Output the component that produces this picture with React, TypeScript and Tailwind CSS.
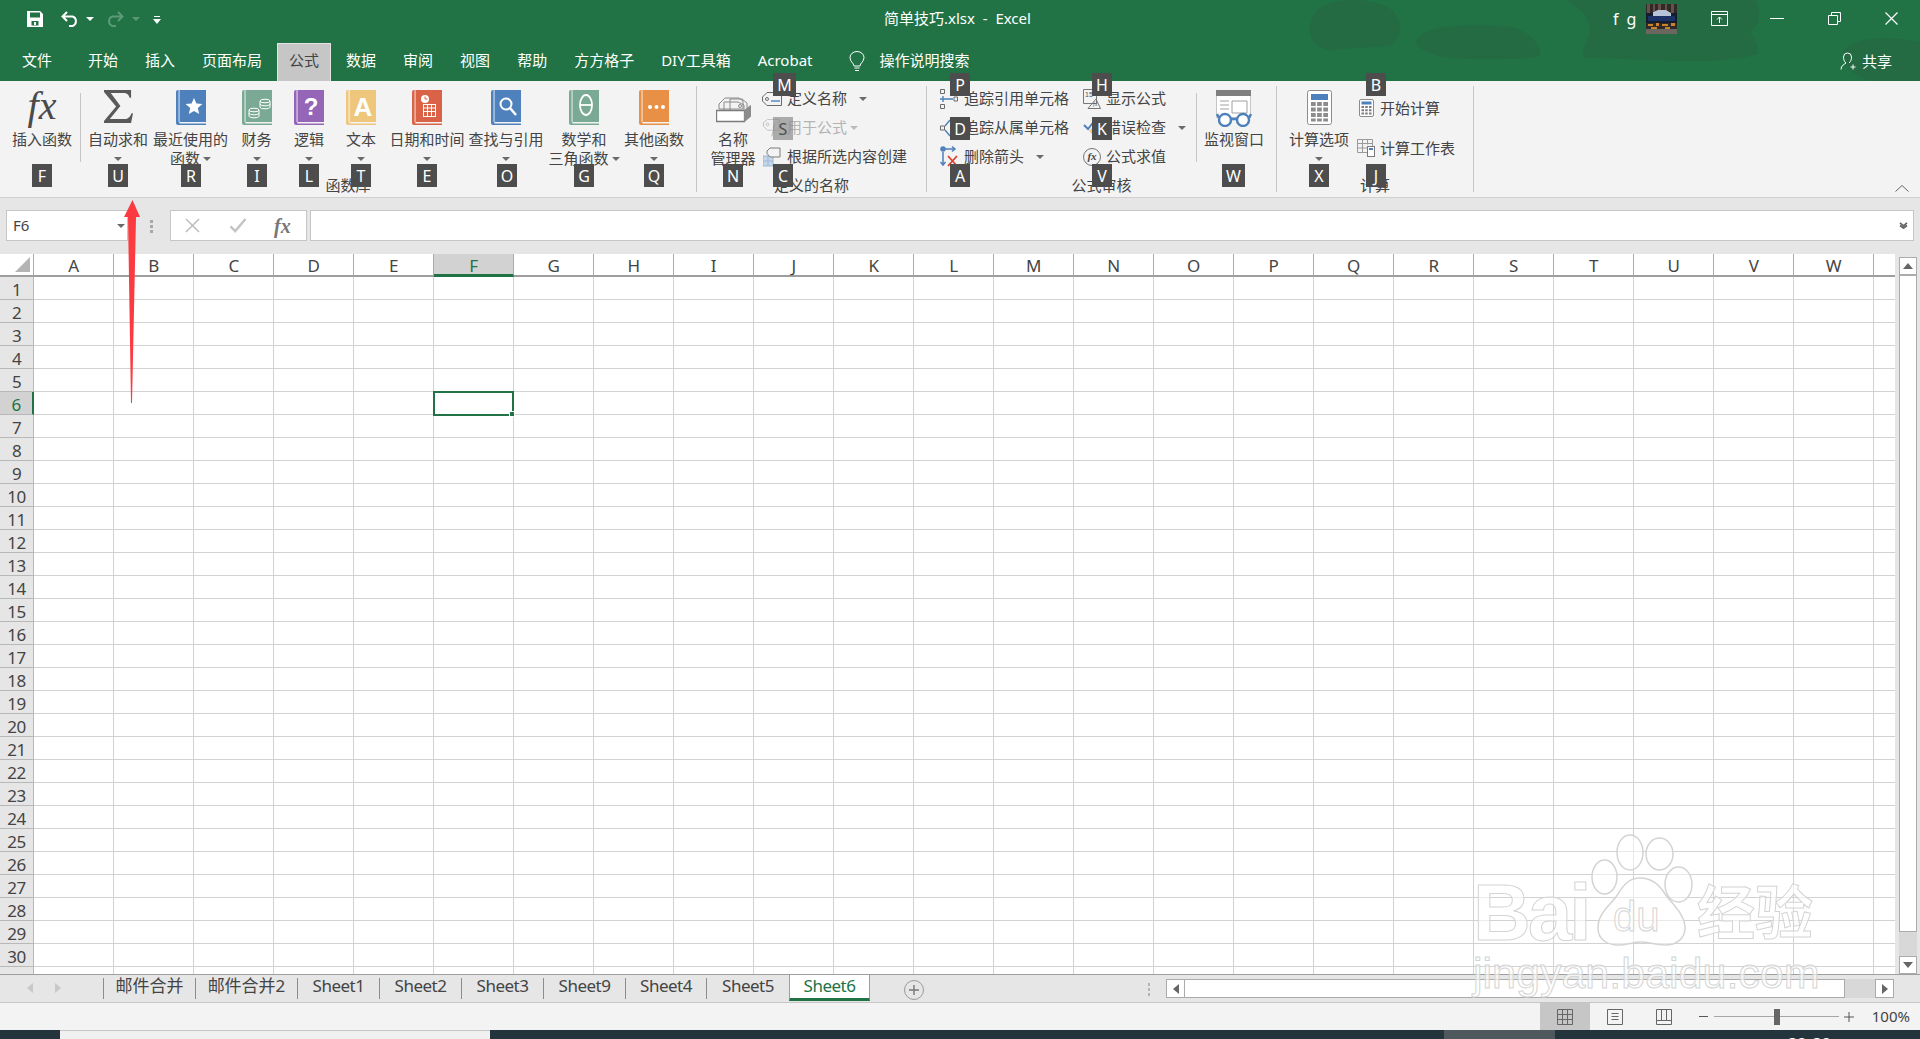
import { type ReactNode } from "react";

const columns = "ABCDEFGHIJKLMNOPQRSTUVW".split("");
const rows = Array.from({ length: 31 }, (_, i) => i + 1);

const tabs = [
  { label: "文件", className: "ml-[10px] mr-[9px]" },
  { label: "开始" },
  { label: "插入" },
  { label: "页面布局" },
  { label: "公式", active: true },
  { label: "数据" },
  { label: "审阅" },
  { label: "视图" },
  { label: "帮助" },
  { label: "方方格子" },
  { label: "DIY工具箱" },
  { label: "Acrobat" },
];

const sheets = [
  { label: "邮件合并", className: "w-[92px]" },
  { label: "邮件合并2", className: "w-[102px]" },
  { label: "Sheet1", className: "w-[82px] tracking-[-0.5px]" },
  { label: "Sheet2", className: "w-[82px] tracking-[-0.5px]" },
  { label: "Sheet3", className: "w-[82px] tracking-[-0.5px]" },
  { label: "Sheet9", className: "w-[82px] tracking-[-0.5px]" },
  { label: "Sheet4", className: "w-[81px] tracking-[-0.5px]" },
  { label: "Sheet5", className: "w-[83px] tracking-[-0.5px]" },
];

const keyTips = [
  { key: "F", left: "left-[32px]", top: "top-[164px]" },
  { key: "U", left: "left-[108px]", top: "top-[164px]" },
  { key: "R", left: "left-[181px]", top: "top-[164px]" },
  { key: "I", left: "left-[247px]", top: "top-[164px]" },
  { key: "L", left: "left-[299px]", top: "top-[164px]" },
  { key: "T", left: "left-[351px]", top: "top-[164px]" },
  { key: "E", left: "left-[417px]", top: "top-[164px]" },
  { key: "O", left: "left-[497px]", top: "top-[164px]" },
  { key: "G", left: "left-[574px]", top: "top-[164px]" },
  { key: "Q", left: "left-[644px]", top: "top-[164px]" },
  { key: "N", left: "left-[723px]", top: "top-[164px]" },
  { key: "M", left: "left-[773px]", top: "top-[73px]", wide: true },
  { key: "C", left: "left-[773px]", top: "top-[164px]" },
  { key: "P", left: "left-[950px]", top: "top-[73px]" },
  { key: "D", left: "left-[950px]", top: "top-[117px]" },
  { key: "A", left: "left-[950px]", top: "top-[164px]" },
  { key: "H", left: "left-[1092px]", top: "top-[73px]" },
  { key: "K", left: "left-[1092px]", top: "top-[117px]" },
  { key: "V", left: "left-[1092px]", top: "top-[164px]" },
  { key: "W", left: "left-[1222px]", top: "top-[164px]", wide: true },
  { key: "X", left: "left-[1309px]", top: "top-[164px]" },
  { key: "B", left: "left-[1366px]", top: "top-[73px]" },
  { key: "J", left: "left-[1366px]", top: "top-[164px]" },
];

function Caret({ className = "" }: { className?: string }) {
  return (
    <svg viewBox="0 0 8 4" className={`h-[4px] w-[8px] shrink-0 ${className}`} fill="#6a6a6a">
      <path d="M0 0h8L4 4z" />
    </svg>
  );
}

function Book({ color, children }: { color: string; children?: ReactNode }) {
  return (
    <svg viewBox="0 0 30 35" className="h-[35px] w-[30px]">
      <path d="M2 0h28v32H3.500a1.500 1.500 0 0 0 0 1.400H30V35H2a2 2 0 0 1-2-2V2a2 2 0 0 1 2-2z" fill={color} />
      <rect x="2.600" y="0" width="0.900" height="32" fill="#fff" opacity="0.900" />
      {children}
    </svg>
  );
}

function Coins() {
  return (
    <g fill="none" stroke="#fff" strokeWidth="1">
      <ellipse cx="23" cy="11" rx="5" ry="1.800" />
      <path d="M18 11v6c0 1 2 1.800 5 1.800s5-.8 5-1.800v-6M18 14c0 1 2 1.800 5 1.800s5-.8 5-1.800" />
      <ellipse cx="12" cy="20" rx="5" ry="1.800" />
      <path d="M7 20v6c0 1 2 1.800 5 1.800s5-.8 5-1.800v-6M7 23c0 1 2 1.800 5 1.800s5-.8 5-1.800" />
    </g>
  );
}

function LargeButton({
  width,
  icon,
  label,
  second,
  caret = true,
  className = "",
}: {
  width: string;
  icon: ReactNode;
  label: string;
  second?: string;
  caret?: boolean;
  className?: string;
}) {
  return (
    <div className={`flex shrink-0 flex-col items-center pt-[4px] ${width} ${className}`}>
      <div className="flex h-[36px] items-start justify-center">{icon}</div>
      <div className="mt-[4px] whitespace-nowrap leading-[19px]">{label}</div>
      {second ? (
        <div className="flex items-center gap-[3px] whitespace-nowrap leading-[19px]">
          {second}
          {caret ? <Caret /> : null}
        </div>
      ) : caret ? (
        <Caret className="mt-[8px]" />
      ) : null}
    </div>
  );
}

function SmallButton({
  icon,
  label,
  iconWidth,
  gap,
  caret,
  disabled,
  height = "h-[29px]",
}: {
  icon: ReactNode;
  label: string;
  iconWidth: string;
  gap: string;
  caret?: string;
  disabled?: boolean;
  height?: string;
}) {
  return (
    <div className={`flex items-center whitespace-nowrap ${height} ${disabled ? "text-[#b4b4b4]" : ""}`}>
      <div className={`flex shrink-0 justify-center ${iconWidth} ${gap}`}>{icon}</div>
      {label}
      {caret ? <Caret className={caret} /> : null}
    </div>
  );
}

function Group({
  width,
  label,
  children,
}: {
  width: string;
  label: string;
  children: ReactNode;
}) {
  return (
    <div className={`mt-[5px] flex h-[106px] shrink-0 flex-col border-r border-[#c6c6c6] ${width}`}>
      <div className="flex h-[90px] shrink-0 items-start">{children}</div>
      <div className="shrink-0 whitespace-nowrap text-center leading-[19px]">{label}</div>
    </div>
  );
}

function TitleBlobs() {
  return (
    <svg viewBox="0 0 640 81" className="pointer-events-none absolute right-0 top-0 h-[81px] w-[640px]" fill="#246b44">
      <path d="M40 8c18-12 60-10 74 4 10 12 8 26-4 33-18 4-48 2-60 6-14-4-22-12-20-24 1-8 4-14 10-19z" />
      <path d="M146 32c20-8 60-8 90-4 20 8 24 20 24 28-20 4-60 4-90 2-20-2-36-10-34-18 2-4 6-6 10-8z" />
      <path d="M286 0h190c4 10 6 24-6 32 6 8 8 14 8 22-24 8-70 8-100 6-22 0-48-2-70-2-10-2-2-12 0-20 4-6 4-24-22-38z" />
      <path d="M564 50c10-14 46-14 76-8v39h-50c-20-6-30-20-26-31z" />
    </svg>
  );
}

function Avatar() {
  return (
    <svg viewBox="0 0 31 30" className="h-[30px] w-[31px]">
      <rect width="31" height="30" fill="#2f2a2a" />
      <path d="M1 0h3v9H1zM7 0h2v7H7zM12 0h3v6h-3zM19 0h2v6h-2zM25 0h3v9h-3z" fill="#6a4f46" />
      <path d="M0 9h31v10H0z" fill="#141c30" />
      <path d="M7 8l5-2h8l5 3v3H7z" fill="#b8c4d8" />
      <rect x="2" y="12" width="27" height="5" fill="#1c3264" />
      <path d="M2 20h5v2H2zM10 19h3v3h-3zM16 20h6v2h-6zM25 19h4v3h-4zM5 23h6v2H5zM19 23h5v2h-5z" fill="#c9832c" />
      <rect y="25" width="31" height="5" fill="#6b6660" />
    </svg>
  );
}

function FormulaBar() {
  return (
    <div className="flex h-[56px] shrink-0 items-start bg-[#e6e6e6] pt-[12px]">
      <div className="ml-[6px] flex h-[31px] w-[122px] items-center justify-between border border-[#c6c6c6] bg-white pl-[6px] pr-[2px] text-[15px] text-[#444]">
        F6
        <Caret />
      </div>
      <div className="ml-[22px] mt-[10px] flex w-[4px] flex-col gap-[2px]">
        <span className="h-[3px] w-[3px] bg-[#a8a8a8]" />
        <span className="h-[3px] w-[3px] bg-[#a8a8a8]" />
        <span className="h-[3px] w-[3px] bg-[#a8a8a8]" />
      </div>
      <div className="ml-[16px] flex h-[31px] w-[137px] items-center border border-[#c6c6c6] bg-white">
        <svg viewBox="0 0 16 16" className="ml-[14px] h-[15px] w-[15px]" stroke="#bdbdbd" strokeWidth="1.600" fill="none">
          <path d="M1 1l14 14M15 1L1 15" />
        </svg>
        <svg viewBox="0 0 18 16" className="ml-[29px] h-[15px] w-[18px]" stroke="#c4c4c4" strokeWidth="2.600" fill="none">
          <path d="M1 9l5 5L17 1" />
        </svg>
        <span className="ml-[27px] font-['Liberation_Serif',serif] text-[20px] font-bold italic leading-none text-[#777]">fx</span>
      </div>
      <div className="ml-[3px] flex h-[31px] w-[1604px] items-center justify-end border border-[#c6c6c6] bg-white pr-[5px]">
        <svg viewBox="0 0 10 8" className="h-[7px] w-[9px]" fill="none" stroke="#666" strokeWidth="2">
          <path d="M1 1l4 3.500L9 1M1 4l4 3 4-3" />
        </svg>
      </div>
    </div>
  );
}

function SheetGrid() {
  return (
    <div className="flex h-[720px] w-[1895px] shrink-0 flex-col text-[17px] tracking-[-0.5px] text-[#444]">
      <div className="flex h-[23px] shrink-0 border-b-2 border-[#9e9e9e]">
        <div className="flex w-[34px] shrink-0 items-end justify-end border-r border-[#ababab] pb-[3px] pr-[3px]">
          <svg viewBox="0 0 15 15" className="h-[15px] w-[15px]" fill="#b4b4b4">
            <path d="M15 0v15H0z" />
          </svg>
        </div>
        {columns.map((column) => (
          <div
            key={column}
            className={`flex w-[80px] shrink-0 items-center justify-center border-r border-[#ababab] pt-[3px] ${column === "F" ? "-mb-[2px] border-b-[3px] border-b-[#217346] bg-[#d2d2d2] text-[#217346]" : ""}`}
          >
            {column}
          </div>
        ))}
      </div>
      <div className="relative min-h-0 flex-1 overflow-hidden bg-white">
        {rows.map((row) => (
          <div key={row} className="flex h-[23px]">
            <div
              className={`flex w-[34px] shrink-0 items-center justify-center border-b border-r border-[#b8b8b8] pt-[3px] ${row === 6 ? "border-r-2 border-r-[#217346] bg-[#d2d2d2] text-[#217346]" : "bg-[#e6e6e6]"}`}
            >
              {row}
            </div>
            {columns.map((column) => (
              <div key={column} className="w-[80px] shrink-0 border-b border-r border-[#d2d2d2]" />
            ))}
            <div className="flex-1 border-b border-[#d2d2d2]" />
          </div>
        ))}
        <div className="absolute left-[433px] top-[114px] h-[25px] w-[81px] border-2 border-[#217346]">
          <span className="absolute -bottom-[3px] -right-[3px] h-[6px] w-[6px] border border-white bg-[#217346]" />
        </div>
      </div>
    </div>
  );
}

function VerticalScroll() {
  return (
    <div className="flex h-[720px] flex-1 flex-col items-center bg-[#e6e6e6] pl-[4px] pr-[3px] pt-[3px]">
      <div className="flex h-[18px] w-[18px] items-center justify-center border border-[#ababab] bg-white">
        <svg viewBox="0 0 10 6" className="h-[6px] w-[10px]" fill="#666">
          <path d="M5 0l5 6H0z" />
        </svg>
      </div>
      <div className="h-[657px] w-[18px] border border-[#ababab] bg-white" />
      <div className="h-[24px] w-[18px] bg-[#d8d8d8]" />
      <div className="flex h-[18px] w-[18px] items-center justify-center border border-[#ababab] bg-white">
        <svg viewBox="0 0 10 6" className="h-[6px] w-[10px]" fill="#666">
          <path d="M5 6L0 0h10z" />
        </svg>
      </div>
    </div>
  );
}

function SheetTabs() {
  return (
    <div className="flex h-[29px] shrink-0 items-start border-b border-t border-b-[#c6c6c6] border-t-[#9e9e9e] bg-[#e6e6e6] text-[#444]">
      <div className="flex h-[26px] w-[103px] items-center pl-[27px]">
        <svg viewBox="0 0 6 10" className="h-[10px] w-[6px]" fill="#c8c8c8">
          <path d="M0 5l6-5v10z" />
        </svg>
        <svg viewBox="0 0 6 10" className="ml-[22px] h-[10px] w-[6px]" fill="#c8c8c8">
          <path d="M6 5L0 10V0z" />
        </svg>
      </div>
      {sheets.map((sheet) => (
        <div key={sheet.label} className={`mt-[3px] flex h-[21px] items-center justify-center border-l border-[#8c8c8c] pb-[5px] text-[17px] ${sheet.className}`}>
          {sheet.label}
        </div>
      ))}
      <div className="flex h-[26px] w-[81px] items-center justify-center border-b-[3px] border-l border-r border-b-[#217346] border-l-[#9e9e9e] border-r-[#9e9e9e] bg-white pb-[2px] text-[17px] tracking-[-0.5px] text-[#217346]">
        Sheet6
      </div>
      <div className="ml-[34px] mt-[5px] flex h-[20px] w-[20px] items-center justify-center rounded-full border border-[#9a9a9a] text-[#777]">
        <svg viewBox="0 0 10 10" className="h-[10px] w-[10px]" stroke="#777" strokeWidth="1.400">
          <path d="M5 0v10M0 5h10" />
        </svg>
      </div>
      <div className="ml-[224px] mt-[8px] flex flex-col gap-[2px]">
        <span className="h-[3px] w-[2px] bg-[#b4b4b4]" />
        <span className="h-[3px] w-[2px] bg-[#b4b4b4]" />
        <span className="h-[3px] w-[2px] bg-[#b4b4b4]" />
      </div>
      <div className="ml-[16px] mt-[4px] flex h-[19px] w-[728px] items-stretch">
        <div className="flex w-[19px] items-center justify-center border border-[#ababab] bg-white">
          <svg viewBox="0 0 6 10" className="h-[10px] w-[6px]" fill="#666">
            <path d="M0 5l6-5v10z" />
          </svg>
        </div>
        <div className="w-[660px] border-y border-r border-[#ababab] bg-white" />
        <div className="w-[30px] bg-[#d8d8d8]" />
        <div className="flex w-[19px] items-center justify-center border border-[#ababab] bg-white">
          <svg viewBox="0 0 6 10" className="h-[10px] w-[6px]" fill="#666">
            <path d="M6 5L0 10V0z" />
          </svg>
        </div>
      </div>
    </div>
  );
}

function StatusBar() {
  return (
    <div className="flex h-[27px] shrink-0 items-center justify-end bg-[#f3f3f3] pr-[10px] text-[#444]">
      <div className="flex h-full w-[50px] items-center justify-center bg-[#c6c6c6]">
        <svg viewBox="0 0 16 16" className="h-[16px] w-[16px]" fill="none" stroke="#666">
          <path d="M.5.5h15v15H.5zM5.500.5v15M10.500.500v15M.5 5.500h15M.5 10.500h15" />
        </svg>
      </div>
      <svg viewBox="0 0 16 16" className="ml-[17px] h-[16px] w-[16px]" fill="none" stroke="#666">
        <path d="M.5.5h15v15H.5zM4.500 4.500h7M4.500 7.500h7M4.500 10.500h7" />
      </svg>
      <svg viewBox="0 0 16 16" className="ml-[33px] h-[16px] w-[16px]" fill="none" stroke="#666">
        <path d="M.5.500h15v15H.5zM.5 11.500h15M5.500.5v11M10.500.5v11" />
      </svg>
      <span className="ml-[27px] h-[1px] w-[9px] bg-[#555]" />
      <div className="relative ml-[6px] flex h-[16px] w-[125px] items-center">
        <span className="h-[1px] w-full bg-[#a6a6a6]" />
        <span className="absolute left-[60px] top-0 h-[16px] w-[6px] bg-[#666]" />
      </div>
      <svg viewBox="0 0 10 10" className="ml-[5px] h-[10px] w-[10px]" stroke="#555">
        <path d="M5 0v10M0 5h10" />
      </svg>
      <span className="ml-[18px] text-[15px]">100%</span>
    </div>
  );
}

function Taskbar() {
  return (
    <div className="flex h-[9px] shrink-0 overflow-hidden bg-[#24343c]">
      <div className="ml-[60px] h-full w-[430px] border-t border-[#c6c6c6] bg-[#f0f0f0]" />
      <div className="ml-[954px] h-full w-[111px] bg-[#4e585d]" />
      <div className="ml-[233px] text-[15px] font-bold leading-[24px] tracking-[1px] text-white">20:20</div>
    </div>
  );
}

function Watermark() {
  return (
    <div className="pointer-events-none absolute left-[1470px] top-[832px] h-[170px] w-[360px] font-['Liberation_Sans',sans-serif] text-white/60 [-webkit-text-stroke:1px_#d4d4d4]">
      <span className="absolute left-[3px] top-[41px] text-[80px] font-bold leading-none tracking-[-3px]">Bai</span>
      <svg viewBox="0 0 104 116" className="absolute left-[120px] top-0 h-[116px] w-[104px]" fill="rgba(255,255,255,.5)" stroke="#d4d4d4" strokeWidth="1.500">
        <ellipse cx="14.500" cy="45" rx="12.500" ry="17" />
        <ellipse cx="40" cy="20.500" rx="13" ry="17.500" />
        <ellipse cx="69.500" cy="22" rx="13.500" ry="16" />
        <ellipse cx="88.500" cy="52.500" rx="13.500" ry="17.500" />
        <path d="M50 46c-10 0-16 6-22 16-6 10-20 18-20 34 0 12 10 17 20 17 10 0 14-3 23-3 8 0 13 3 24 3 11 0 20-6 20-17 0-14-13-24-20-34-6-10-15-16-25-16z" />
      </svg>
      <span className="absolute left-[143px] top-[64px] text-[42px] leading-none">du</span>
      <span className="absolute left-[227px] top-[48px] font-['Noto_Sans_CJK_SC',sans-serif] text-[58px] font-bold leading-none">经验</span>
      <span className="absolute left-[3px] top-[120px] text-[43px] leading-none">jingyan.baidu.com</span>
    </div>
  );
}

export default function App() {
  return (
    <div className="relative flex h-[1039px] w-[1920px] flex-col overflow-hidden bg-white font-['Noto_Sans','Noto_Sans_CJK_SC',sans-serif] text-[15px]">
      <div className="relative h-[81px] shrink-0 bg-[#217346] text-white">
        <TitleBlobs />
        <div className="relative flex h-[43px] items-center pb-[6px]">
          <svg viewBox="0 0 16 16" className="ml-[27px] h-[16px] w-[16px]" fill="#fff">
            <path fillRule="evenodd" d="M0 0h13l3 3v13H0zM3 1.500v5h10v-5zM4.500 10v4.500h7V10zM7 11h2v3H7z" />
          </svg>
          <svg viewBox="0 0 19 16" className="ml-[18px] h-[16px] w-[19px]" fill="none" stroke="#fff" strokeWidth="2">
            <path d="M6 1L1.500 5.500 6 10M2 5.500h9.500a5 5 0 0 1 0 9.500H8" />
          </svg>
          <Caret className="ml-[6px] [&_path]:fill-white" />
          <svg viewBox="0 0 19 16" className="ml-[11px] h-[16px] w-[19px]" fill="none" stroke="#5a9a78" strokeWidth="2">
            <path d="M13 1l4.500 4.500L13 10M17 5.500H7.500a5 5 0 0 0 0 9.500H11" />
          </svg>
          <Caret className="ml-[8px] [&_path]:fill-[#5a9a78]" />
          <svg viewBox="0 0 8 8" className="ml-[13px] mt-[3px] h-[8px] w-[8px]" fill="#fff">
            <path d="M1 0h6v1H1zM0 3h8L4 8z" />
          </svg>
          <span className="ml-[723px] whitespace-nowrap">简单技巧.xlsx&nbsp; -&nbsp; Excel</span>
          <span className="ml-[582px] text-[16px] tracking-[2px]">f g</span>
          <div className="ml-[8px]">
            <Avatar />
          </div>
          <svg viewBox="0 0 17 15" className="ml-[34px] h-[15px] w-[17px]" fill="none" stroke="#fff">
            <path d="M.5.5h16v14H.5zM.5 3.500h16M8.500 12V6M6 8.500l2.500-2.500L11 8.500" />
          </svg>
          <span className="ml-[42px] h-[1px] w-[14px] bg-white" />
          <svg viewBox="0 0 13 13" className="ml-[44px] h-[13px] w-[13px]" fill="none" stroke="#fff">
            <path d="M.5 3.500h9v9h-9zM3.500 3.500v-3h9v9h-3" />
          </svg>
          <svg viewBox="0 0 13 13" className="ml-[44px] h-[13px] w-[13px]" fill="none" stroke="#fff" strokeWidth="1.200">
            <path d="M.5.5l12 12M12.500.5l-12 12" />
          </svg>
        </div>
        <div className="relative flex h-[38px] items-stretch gap-[3px]">
          {tabs.map((tab) => (
            <div
              key={tab.label}
              className={`flex items-center whitespace-nowrap pb-[4px] ${tab.className ?? ""} ${tab.active ? "border-x border-t border-[#e4e4e4] bg-[#c6c6c6] px-[11px] text-[#444]" : "px-[12px]"}`}
            >
              {tab.label}
            </div>
          ))}
          <svg viewBox="0 0 16 22" className="ml-[21px] mt-[8px] h-[22px] w-[16px]" fill="none" stroke="#fff">
            <path d="M5 15c0-3-4-4-4-8.500a7 6 0 0 1 14 0C15 11 11 12 11 15zM5.500 17h5M6 19.500h4" />
          </svg>
          <span className="ml-[12px] flex items-center whitespace-nowrap pb-[4px]">操作说明搜索</span>
          <div className="ml-auto flex items-center pb-[2px] pr-[28px]">
            <svg viewBox="0 0 18 18" className="h-[18px] w-[18px]" fill="none" stroke="#fff">
              <path d="M1 17.500c0-4 3-5 5-6.500-2-1.500-2.500-4-2.500-6a4 4 0 0 1 8 0c0 2-.5 4.500-2.500 6M13 12.500v5M10.500 15h5" />
            </svg>
            <span className="ml-[4px]">共享</span>
          </div>
        </div>
      </div>

      <div className="flex h-[117px] shrink-0 border-b border-[#d0d0d0] bg-[#f3f3f3] text-[#444]">
        <Group width="w-[697px]" label="函数库">
          <LargeButton
            width="w-[76px]"
            className="ml-[4px]"
            caret={false}
            label="插入函数"
            icon={<span className="-mt-[6px] font-['Liberation_Serif',serif] text-[40px] italic leading-[44px] text-[#4a4a4a]">fx</span>}
          />
          <div className="mt-[7px] h-[69px] w-px shrink-0 bg-[#c6c6c6]" />
          <LargeButton
            width="w-[74px]"
            label="自动求和"
            icon={
              <svg viewBox="0 0 30 34" className="h-[33px] w-[29px]" fill="#595959">
                <path d="M0 0h28v8h-1.500C25.500 4.500 24 3 20 3H7l10 13.500L6 30h15c4 0 6-2 7.500-6H30l-2 10H0v-2l12.500-15L0 2z" />
              </svg>
            }
          />
          <LargeButton
            width="w-[71px]"
            label="最近使用的"
            second="函数"
            icon={
              <Book color="#4e81bc">
                <path d="M18 8l2.400 5.600 6 .5-4.600 4 1.400 5.900-5.200-3.100-5.200 3.100 1.400-5.900-4.600-4 6-.5z" fill="#fff" />
              </Book>
            }
          />
          <LargeButton width="w-[61px]" label="财务" icon={<Book color="#7aaa96"><Coins /></Book>} />
          <LargeButton
            width="w-[44px]"
            label="逻辑"
            icon={
              <Book color="#9566b8">
                <text x="17" y="25" textAnchor="middle" fontSize="24" fontWeight="700" fill="#fff" fontFamily="Liberation Sans">?</text>
              </Book>
            }
          />
          <LargeButton
            width="w-[60px]"
            label="文本"
            icon={
              <Book color="#efc77c">
                <text x="17" y="26" textAnchor="middle" fontSize="26" fontWeight="700" fill="#fff" fontFamily="Liberation Sans">A</text>
              </Book>
            }
          />
          <LargeButton
            width="w-[72px]"
            label="日期和时间"
            icon={
              <Book color="#da6347">
                <circle cx="13" cy="9" r="4" fill="#fff" />
                <path d="M13 6.500V9h2.500" stroke="#da6347" fill="none" />
                <path fill="#fff" fillRule="evenodd" d="M11 14h13v13H11zM12 15v2.500h3V15zM16 15v2.500h3V15zM20 15v2.500h3V15zM12 18.500V21h3v-2.500zM16 18.500V21h3v-2.500zM20 18.500V21h3v-2.500zM12 22v4h3v-4zM16 22v4h3v-4zM20 22v4h3v-4z" />
              </Book>
            }
          />
          <LargeButton
            width="w-[86px]"
            label="查找与引用"
            icon={
              <Book color="#4f81bd">
                <circle cx="15" cy="14" r="5.500" fill="none" stroke="#fff" strokeWidth="2" />
                <path d="M19 18l6 7" stroke="#fff" strokeWidth="2.500" />
              </Book>
            }
          />
          <LargeButton
            width="w-[70px]"
            label="数学和"
            second="三角函数"
            icon={
              <Book color="#7aaa96">
                <ellipse cx="17" cy="15" rx="6" ry="10" fill="none" stroke="#fff" strokeWidth="1.800" />
                <path d="M11 15h12" stroke="#fff" strokeWidth="1.800" />
              </Book>
            }
          />
          <LargeButton
            width="w-[70px]"
            label="其他函数"
            icon={
              <Book color="#e89045">
                <circle cx="11" cy="17" r="2" fill="#fff" />
                <circle cx="17.500" cy="17" r="2" fill="#fff" />
                <circle cx="24" cy="17" r="2" fill="#fff" />
              </Book>
            }
          />
        </Group>

        <Group width="w-[230px]" label="定义的名称">
          <LargeButton
            width="w-[58px]"
            className="ml-[7px]"
            caret={false}
            label="名称"
            second="管理器"
            icon={
              <svg viewBox="0 0 35 26" className="mt-[7px] h-[26px] w-[35px]" fill="#f3f3f3" stroke="#8a8a8a">
                <path d="M3 7l6-6h14l4 3v8H3zM8 5h14l6 3v8H8zM14 2h12l5 4v8H14z" />
                <path d="M.5 13.500h28v11H.5z" fill="#fff" stroke="#7a7a7a" strokeWidth="1.300" />
                <path d="M28.500 13.500l6-5v11l-6 5z" fill="#8c8c8c" />
                <circle cx="24" cy="9" r="1.500" />
              </svg>
            }
          />
          <div className="-mt-[2px] flex flex-col">
            <SmallButton
              label="定义名称"
              iconWidth="w-[20px]"
              gap="mr-[5px]"
              caret="ml-[12px]"
              icon={
                <svg viewBox="0 0 20 14" className="h-[14px] w-[20px]" fill="none" stroke="#6a6a6a">
                  <path d="M5 .5h14.500v13H5L.5 9V5z" />
                  <circle cx="5" cy="7" r="1.500" />
                  <path d="M9 9h9" stroke="#4e81bc" strokeWidth="1.400" />
                </svg>
              }
            />
            <SmallButton
              disabled
              label="用于公式"
              iconWidth="w-[20px]"
              gap="mr-[5px]"
              caret="ml-[3px] opacity-40"
              icon={
                <svg viewBox="0 0 20 20" className="h-[18px] w-[20px]" fill="none" stroke="#bdbdbd">
                  <path d="M5 .5h13v12H5L.5 8V4z" />
                  <circle cx="5" cy="6" r="1.500" />
                  <path d="M9 19c3 0 2-10 4-14" strokeWidth="1.400" />
                </svg>
              }
            />
            <SmallButton
              label="根据所选内容创建"
              iconWidth="w-[20px]"
              gap="mr-[5px]"
              icon={
                <svg viewBox="0 0 18 20" className="h-[20px] w-[18px]" fill="none" stroke="#7a7a7a">
                  <path d="M0 9h10v10H0z" fill="#c6d7ea" stroke="#9bb6d2" />
                  <path d="M5 9v10M0 14h10" stroke="#9bb6d2" />
                  <path d="M7 1h10v9H7L4 6.500V4z" fill="#f3f3f3" />
                </svg>
              }
            />
          </div>
        </Group>

        <Group width="w-[350px]" label="公式审核">
          <div className="-mt-[2px] ml-[13px] flex w-[143px] shrink-0 flex-col">
            <SmallButton
              label="追踪引用单元格"
              iconWidth="w-[18px]"
              gap="mr-[6px]"
              icon={
                <svg viewBox="0 0 18 20" className="h-[20px] w-[18px]" fill="none" stroke="#6a6a6a">
                  <path d="M.5.5h4v4h-4zM.5 15.500h4v4h-4zM14 8h3.500v4H14z" />
                  <path d="M6 10h7M3 7v6M0 10h6" stroke="#4e81bc" strokeWidth="1.400" />
                </svg>
              }
            />
            <SmallButton
              label="追踪从属单元格"
              iconWidth="w-[18px]"
              gap="mr-[6px]"
              icon={
                <svg viewBox="0 0 18 20" className="h-[20px] w-[18px]" fill="none" stroke="#6a6a6a">
                  <path d="M.5 8h4v4h-4z" />
                  <path d="M5 8l5-6M5 12l5 6" stroke="#4e81bc" strokeWidth="1.400" />
                </svg>
              }
            />
            <SmallButton
              label="删除箭头"
              iconWidth="w-[18px]"
              gap="mr-[6px]"
              caret="ml-[12px]"
              icon={
                <svg viewBox="0 0 18 22" className="h-[22px] w-[18px]" fill="none" stroke="#4e81bc" strokeWidth="1.500">
                  <circle cx="3" cy="3" r="2" fill="#4e81bc" />
                  <path d="M5 3h10M12 .5L15 3l-3 2.500M3 6v13M.5 16L3 19l2.500-3" />
                  <path d="M8 10l9 10M17 10L8 20" stroke="#d6452e" strokeWidth="1.800" />
                </svg>
              }
            />
          </div>
          <div className="-mt-[2px] flex w-[113px] shrink-0 flex-col">
            <SmallButton
              label="显示公式"
              iconWidth="w-[18px]"
              gap="mr-[5px]"
              icon={
                <svg viewBox="0 0 18 20" className="h-[20px] w-[18px]" fill="none" stroke="#777">
                  <path d="M.5.5h13v14H.5zM5 19.500h12.500L13 10z" />
                  <text x="2" y="8" fontSize="7" fill="#555" stroke="none" fontFamily="Liberation Sans">15</text>
                  <text x="10" y="17" fontSize="6" fill="#555" stroke="none" fontStyle="italic" fontFamily="Liberation Serif">fx</text>
                </svg>
              }
            />
            <SmallButton
              label="错误检查"
              iconWidth="w-[18px]"
              gap="mr-[5px]"
              caret="ml-[12px]"
              icon={
                <svg viewBox="0 0 18 20" className="h-[20px] w-[18px]" fill="none">
                  <path d="M12 7l6 6-6 6-6-6z" fill="#efc77c" />
                  <path d="M1 7l4 4 7-9" stroke="#4e81bc" strokeWidth="2" />
                </svg>
              }
            />
            <SmallButton
              label="公式求值"
              iconWidth="w-[18px]"
              gap="mr-[5px]"
              icon={
                <span className="flex h-[18px] w-[18px] items-center justify-center rounded-full border border-[#777] font-['Liberation_Serif',serif] text-[11px] font-bold italic">fx</span>
              }
            />
          </div>
          <div className="mt-[7px] h-[69px] w-px shrink-0 bg-[#c6c6c6]" />
          <LargeButton
            width="w-[74px]"
            caret={false}
            label="监视窗口"
            icon={
              <svg viewBox="0 0 36 37" className="h-[37px] w-[36px]" fill="none">
                <path d="M.5.5h34v27H.5z" fill="#fff" stroke="#c6c6c6" />
                <path d="M0 0h35v6H0z" fill="#7f7f7f" />
                <path d="M16 11h15v12H16zM4 11h9M4 15h9M4 19h9" stroke="#a0a0a0" />
                <circle cx="9" cy="30" r="6" fill="#fff" stroke="#4e81bc" strokeWidth="2.400" />
                <circle cx="27" cy="30" r="6" fill="#fff" stroke="#4e81bc" strokeWidth="2.400" />
                <path d="M15 29h6M3 28L1 24M33 28l2-4" stroke="#4e81bc" strokeWidth="2.400" />
              </svg>
            }
          />
        </Group>

        <Group width="w-[197px]" label="计算">
          <LargeButton
            width="w-[76px]"
            className="ml-[4px]"
            label="计算选项"
            icon={
              <svg viewBox="0 0 25 35" className="h-[35px] w-[25px]">
                <rect x=".5" y=".5" width="24" height="34" rx="2" fill="#fff" stroke="#8c8c8c" />
                <rect x="4" y="4" width="17" height="6" fill="#4e81bc" />
                <path d="M4 12h4.700v4H4zM10.100 12h4.700v4h-4.700zM16.300 12H21v4h-4.700zM4 17.500h4.700v4H4zM10.100 17.500h4.700v4h-4.700zM16.300 17.500H21v4h-4.700zM4 23h4.700v4H4zM10.100 23h4.700v4h-4.700zM16.300 23H21v4h-4.700zM4 28.500h4.700v3H4zM10.100 28.500h4.700v3h-4.700zM16.300 28.500H21v3h-4.700z" fill="#8c8c8c" />
              </svg>
            }
          />
          <div className="mt-[2px] flex flex-col">
            <SmallButton
              height="h-[40px]"
              label="开始计算"
              iconWidth="w-[18px]"
              gap="mr-[5px]"
              icon={
                <svg viewBox="0 0 15 18" className="h-[18px] w-[15px]">
                  <rect x=".5" y=".5" width="14" height="17" rx="1.500" fill="#fff" stroke="#8c8c8c" />
                  <rect x="2.500" y="2.500" width="10" height="3" fill="#4e81bc" />
                  <path d="M2.500 7h2.500v2H2.500zM6.200 7h2.500v2H6.200zM10 7h2.500v2H10zM2.500 10.200h2.500v2H2.500zM6.200 10.200h2.500v2H6.200zM10 10.200h2.500v2H10zM2.500 13.400h2.500v2H2.500zM6.200 13.400h2.500v2H6.200zM10 13.400h2.500v2H10z" fill="#7a7a7a" />
                </svg>
              }
            />
            <SmallButton
              height="h-[40px]"
              label="计算工作表"
              iconWidth="w-[18px]"
              gap="mr-[5px]"
              icon={
                <svg viewBox="0 0 18 18" className="h-[18px] w-[18px]" fill="none" stroke="#9a9a9a">
                  <path d="M.5.5h15v13H.5zM.5 4.500h15M5.500.5v13M10.500.5v5M.5 9h10" />
                  <rect x="10.500" y="7.500" width="7" height="10" fill="#fff" stroke="#7a7a7a" />
                  <rect x="12" y="9" width="4" height="2" fill="#4e81bc" stroke="none" />
                </svg>
              }
            />
          </div>
        </Group>

        <svg viewBox="0 0 14 7" className="ml-auto mr-[11px] mt-[104px] h-[7px] w-[14px]" fill="none" stroke="#666">
          <path d="M.5 6.500L7 .5l6.500 6" />
        </svg>
      </div>

      <FormulaBar />

      <div className="flex h-[720px] shrink-0">
        <SheetGrid />
        <VerticalScroll />
      </div>

      <SheetTabs />
      <StatusBar />
      <Taskbar />

      {keyTips.map((tip) => (
        <div
          key={tip.key}
          className={`absolute flex h-[23px] items-center justify-center bg-[#4d4d4d] text-[16px] text-white ${tip.left} ${tip.top} ${tip.wide ? "w-[23px]" : "w-[20px]"}`}
        >
          {tip.key}
        </div>
      ))}
      <div className="absolute left-[773px] top-[117px] flex h-[23px] w-[20px] items-center justify-center bg-[#8c8c8c]/70 text-[16px] text-[#4d4d4d]">
        S
      </div>

      <svg viewBox="0 0 18 204" className="pointer-events-none absolute left-[123px] top-[200px] h-[204px] w-[18px]" fill="#fb3b40">
        <path d="M9.500 0L17 17h-4L9 203h-1L5 17H1z" />
      </svg>

      <Watermark />
    </div>
  );
}
